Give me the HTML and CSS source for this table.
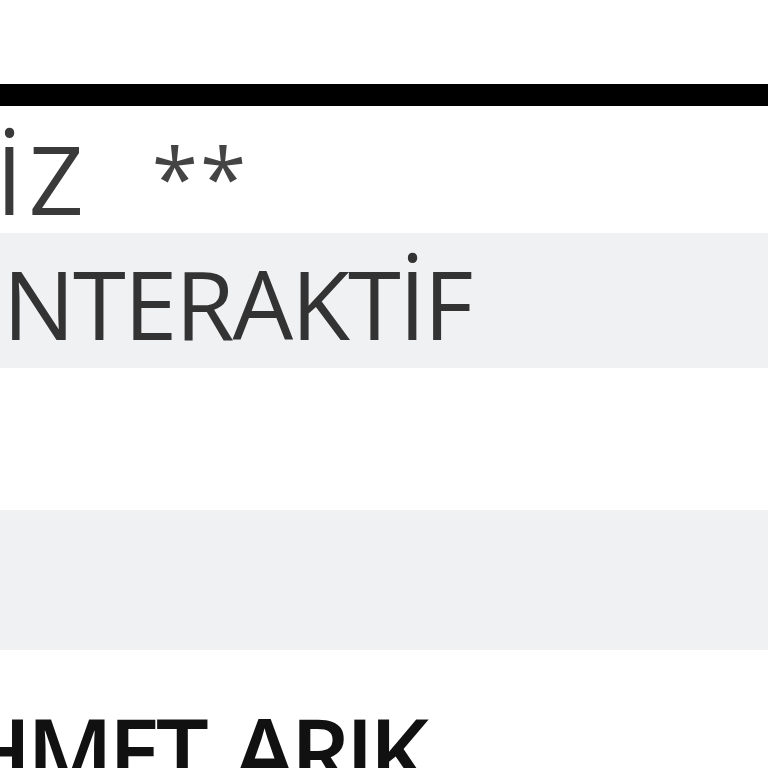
FILE: index.html
```html
<!DOCTYPE html>
<html lang="tr">
<head>
<meta charset="utf-8">
<link rel="stylesheet" href="styles.css">
</head>
<body>
<div class="view">
  <div class="rule"></div>
  <div class="table">
    <div class="row row-1"><span class="cell cell-a">İZ</span><span class="stars">**</span></div>
    <div class="row row-2 shade"><span class="cell cell-b">İNTERAKTİF</span></div>
    <div class="row row-3"></div>
    <div class="row row-4 shade"></div>
    <div class="row row-5"><span class="cell cell-c">AHMET ARIK</span></div>
  </div>
</div>
</body>
</html>
```

FILE: styles.css
```css
html, body {
  margin: 0;
  padding: 0;
  background: #ffffff;
}
.view {
  width: 768px;
  height: 768px;
  overflow: hidden;
  display: flex;
  flex-direction: column;
}
.rule {
  margin-top: 84px;
  height: 22px;
  background: #000;
  flex: none;
}
.table {
  display: flex;
  flex-direction: column;
  flex: none;
}
.row {
  box-sizing: border-box;
  flex: none;
  font-family: "Open Sans", "Liberation Sans", sans-serif;
  font-size: 96px;
  line-height: 96px;
  white-space: pre;
  overflow: hidden;
}
.shade { background: #f0f1f3; }
.row-1 { height: 127px; padding-top: 23px; color: #3a3a3a; }
.row-2 { height: 135px; padding-top: 22px; color: #333; letter-spacing: -2px; }
.row-3 { height: 142px; }
.row-4 { height: 140px; }
.row-5 { height: 200px; padding-top: 53px; color: #111; font-weight: 600; letter-spacing: -5px; word-spacing: 10px; font-size: 94px; }
.cell { display: inline-block; }
.cell-a { margin-left: -4px; letter-spacing: 6px; }
.stars {
  display: inline-block;
  margin-left: 62px;
  font-size: 84px;
  letter-spacing: 2px;
  color: #444;
  vertical-align: 6px;
}
.cell-b { margin-left: -22px; }
.cell-c { margin-left: -96px; }
```
